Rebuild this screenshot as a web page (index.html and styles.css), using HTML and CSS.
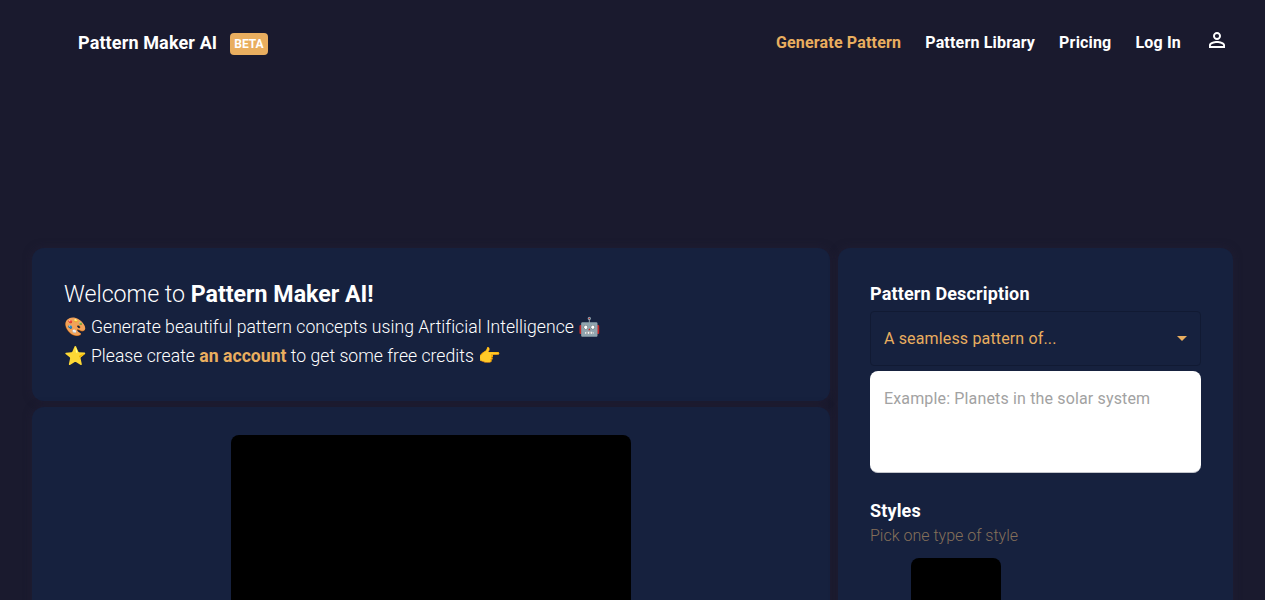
FILE: index.html
```html
<!DOCTYPE html>
<html lang="en">
<head>
<meta charset="utf-8">
<title>Pattern Maker AI</title>
<link rel="stylesheet" href="styles.css">
</head>
<body>
<div class="page">
  <header class="topbar">
    <div class="brand">
      <span class="brand-name">Pattern Maker AI</span>
      <span class="badge">BETA</span>
    </div>
    <nav class="nav">
      <a class="nav-link active" href="#">Generate Pattern</a>
      <a class="nav-link" href="#">Pattern Library</a>
      <a class="nav-link" href="#">Pricing</a>
      <a class="nav-link" href="#">Log In</a>
      <svg class="user-icon" viewBox="0 0 24 24" width="24" height="24" aria-hidden="true"><path d="M12 5.9a2.1 2.1 0 1 1 0 4.2 2.1 2.1 0 0 1 0-4.2m0 9c2.97 0 6.1 1.46 6.1 2.1v1.1H5.9V17c0-.64 3.13-2.1 6.1-2.1M12 4C9.79 4 8 5.79 8 8s1.79 4 4 4 4-1.79 4-4-1.79-4-4-4zm0 9c-2.67 0-8 1.34-8 4v3h16v-3c0-2.66-5.33-4-8-4z"/></svg>
    </nav>
  </header>
  <main class="layout">
    <div class="left-col">
      <section class="card welcome">
        <h1 class="welcome-title">Welcome to <strong>Pattern Maker AI!</strong></h1>
        <p class="welcome-line"><span class="emoji">🎨</span> Generate beautiful pattern concepts using Artificial Intelligence <span class="emoji">🤖</span></p>
        <p class="welcome-line"><span class="emoji">⭐</span> Please create <a class="account-link" href="#">an account</a> to get some free credits <span class="emoji">👉</span></p>
      </section>
      <section class="card preview-card">
        <div class="preview"></div>
      </section>
    </div>
    <aside class="card side">
      <h2 class="side-title">Pattern Description</h2>
      <div class="select">
        <span>A seamless pattern of...</span>
        <span class="caret"></span>
      </div>
      <div class="textarea">Example: Planets in the solar system</div>
      <h2 class="side-title styles-title">Styles</h2>
      <p class="hint">Pick one type of style</p>
      <div class="style-thumb"></div>
    </aside>
  </main>
</div>
</body>
</html>
```
FILE: styles.css
```css
* { box-sizing: border-box; }
html { background: #fff; overflow: hidden; }
body { margin: 0; font-family: Roboto, "Noto Color Emoji", sans-serif; color: #fff; }
.page {
  width: 1265px;
  height: 600px;
  overflow: hidden;
  background: #1a1a2e;
}
.topbar {
  height: 84px;
  padding: 0 36px 0 78px;
  display: flex;
  align-items: center;
  justify-content: space-between;
}
.brand { display: flex; align-items: center; gap: 13px; }
.brand-name { font-size: 18px; font-weight: 700; letter-spacing: .13px; }
.badge {
  margin-top: 3px;
  background: #e9ae5f;
  border-radius: 4px;
  font-size: 12px;
  font-weight: 700;
  line-height: 22px;
  height: 22px;
  padding: 0 4px;
}
.nav { display: flex; align-items: center; gap: 24px; }
.nav-link { color: #fff; text-decoration: none; font-size: 16px; font-weight: 700; letter-spacing: .18px; }
.nav-link.active { color: #e9ae5f; }
.user-icon { fill: #fff; margin-top: -4px; }
.layout {
  margin-top: 164px;
  padding: 0 32px;
  display: flex;
  gap: 8px;
  align-items: flex-start;
}
.card {
  background: #16213e;
  border-radius: 12px;
  box-shadow: 0 0 8px rgba(38, 32, 56, .5);
}
.left-col { width: 798px; display: flex; flex-direction: column; gap: 6px; }
.welcome { height: 153px; padding: 30px 32px; }
.welcome-title { margin: 0 0 3px; font-size: 23.2px; font-weight: 300; line-height: 32px; }
.welcome-title strong { font-weight: 700; }
.welcome-line { margin: 0; font-size: 17.6px; font-weight: 300; line-height: 29px; letter-spacing: .02px; }
.emoji { font-size: 18.2px; line-height: 1; }
.account-link { color: #e9ae5f; font-weight: 700; text-decoration: none; }
.preview-card { height: 300px; padding: 28px 199px; }
.preview { width: 400px; height: 400px; background: #000; border-radius: 8px; }
.side { width: 395px; height: 400px; padding: 32px; }
.side-title { margin: 0; font-size: 18px; font-weight: 700; line-height: 28px; letter-spacing: .15px; }
.select {
  margin-top: 3px;
  height: 55px;
  padding: 0 13px;
  border: 1px solid #111a33;
  border-radius: 4px;
  color: #e9ae5f;
  font-size: 16px;
  letter-spacing: .15px;
  display: flex;
  align-items: center;
  justify-content: space-between;
}
.caret {
  width: 0;
  height: 0;
  border: 5px solid transparent;
  border-top-color: #e9ae5f;
  border-bottom: 0;
}
.textarea {
  margin-top: 5px;
  height: 102px;
  padding: 17px 14px;
  background: #fff;
  border-radius: 8px;
  border-bottom: 1px solid #c4c6cc;
  color: #a2a2a2;
  font-size: 16px;
  letter-spacing: .15px;
  line-height: 22px;
}
.styles-title { margin-top: 24px; }
.hint { margin: 0; color: #85705a; font-size: 16px; font-weight: 300; line-height: 22px; }
.style-thumb { margin: 11px 0 0 41px; width: 90px; height: 90px; background: #000; border-radius: 8px; }
```
